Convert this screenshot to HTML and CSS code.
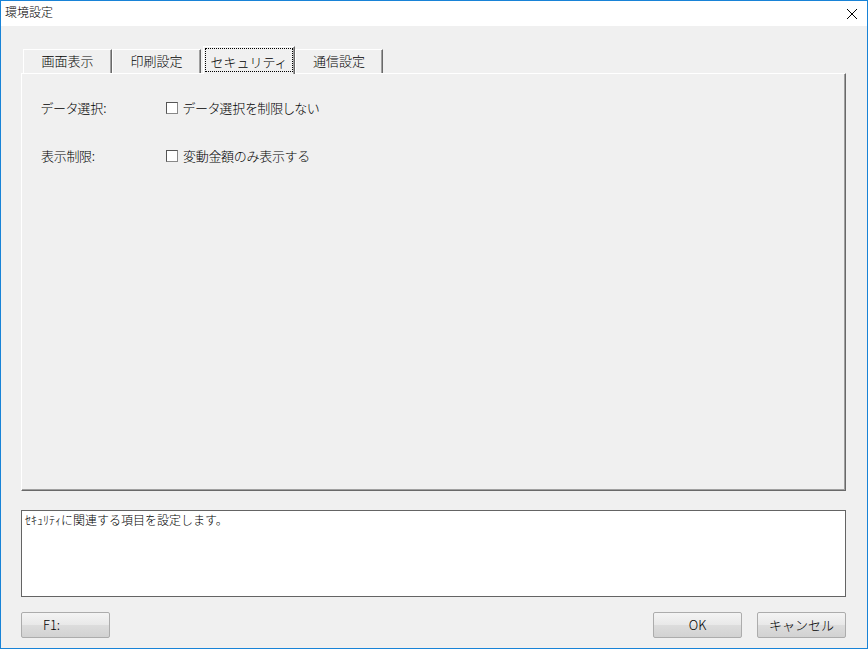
FILE: index.html
```html
<!DOCTYPE html>
<html lang="ja">
<head>
<meta charset="utf-8">
<title>環境設定</title>
<link rel="stylesheet" href="styles.css">
</head>
<body>
<div class="window">
  <div class="titlebar">
    <span class="title">環境設定</span>
    <svg class="close" width="12" height="12" viewBox="0 0 12 12"><path d="M1 1 L11 11 M11 1 L1 11" stroke="#000" stroke-width="1" fill="none"/></svg>
  </div>
  <div class="client">
    <div class="tabs">
      <div class="tab first">画面表示</div>
      <div class="tab">印刷設定</div>
      <div class="tab selected"><span class="focus">セキュリティ</span></div>
      <div class="tab last">通信設定</div>
    </div>
    <div class="panel">
      <div class="form">
        <div class="label prop">データ選択:</div>
        <label class="check"><span class="box"></span><span class="prop">データ選択を制限しない</span></label>
        <div class="label">表示制限:</div>
        <label class="check"><span class="box"></span><span>変動金額のみ表示する</span></label>
      </div>
    </div>
    <div class="desc">ｾｷｭﾘﾃｨに関連する項目を設定します。</div>
    <div class="buttons">
      <button class="btn f1">F1:</button>
      <div class="right">
        <button class="btn">OK</button>
        <button class="btn">キャンセル</button>
      </div>
    </div>
  </div>
</div>
</body>
</html>
```
FILE: styles.css
```css
html, body {
  margin: 0;
  padding: 0;
}
body {
  font-family: "Noto Sans CJK JP", "Liberation Sans", sans-serif;
  font-size: 12px;
  font-weight: 300;
  color: #000;
}
.window {
  width: 868px;
  height: 649px;
  box-sizing: border-box;
  border: 1px solid #1883d7;
  background: #f0f0f0;
  display: flex;
  flex-direction: column;
}
.titlebar {
  height: 25px;
  background: #fff;
  display: flex;
  align-items: center;
  justify-content: space-between;
  padding: 0 9px 0 4px;
}
.title {
  font-size: 12px;
  line-height: 16px;
  margin-top: -3px;
}
.close {
  display: block;
}
.client {
  flex: 1;
  padding: 20px 21px 0 20px;
  display: flex;
  flex-direction: column;
}
.tabs {
  display: flex;
  align-items: flex-end;
  height: 27px;
  position: relative;
  z-index: 1;
}
.tab {
  box-sizing: border-box;
  width: 89px;
  height: 24px;
  border-top: 1px solid #fff;
  border-left: 1px solid #fff;
  border-right: 1px solid #696969;
  box-shadow: inset -1px 0 0 #a0a0a0;
  padding-top: 3px;
  text-align: center;
  font-size: 13px;
  line-height: 16px;
  background: #f0f0f0;
}
.tab.first {
  margin-left: 2px;
}
.tab.last {
  width: 88px;
}
.tab.selected {
  width: 92px;
  height: 28px;
  margin-left: 2px;
  margin-bottom: -1px;
  padding: 1px 1px 2px 1px;
}
.focus {
  display: block;
  height: 24px;
  box-sizing: border-box;
  border: 1px dotted #000;
  padding-top: 5px;
  line-height: 16px;
}
.panel {
  box-sizing: border-box;
  height: 418px;
  border-top: 1px solid #fff;
  border-left: 1px solid #fff;
  border-right: 1px solid #696969;
  border-bottom: 1px solid #696969;
  box-shadow: inset -1px -1px 0 #a0a0a0;
  padding: 26px 0 0 19px;
}
.form {
  display: grid;
  grid-template-columns: 125px auto;
  row-gap: 32px;
  font-size: 13px;
  line-height: 16px;
  letter-spacing: -0.3px;
}
.prop {
  font-feature-settings: "palt";
  letter-spacing: 0;
}
.check {
  display: flex;
  align-items: center;
  gap: 5px;
}
.box {
  width: 12px;
  height: 12px;
  box-sizing: border-box;
  border: 1px solid #555;
  border-right-color: #888;
  border-bottom-color: #888;
  background: #fff;
}
.desc {
  margin-top: 19px;
  height: 87px;
  box-sizing: border-box;
  border: 1px solid #646464;
  background: #fff;
  padding: 1px 3px;
  font-size: 12px;
  line-height: 16px;
}
.buttons {
  margin-top: 15px;
  display: flex;
  justify-content: space-between;
}
.right {
  display: flex;
  gap: 15px;
}
.btn {
  width: 89px;
  height: 26px;
  box-sizing: border-box;
  border: 1px solid #acacac;
  border-radius: 2px;
  background: linear-gradient(#f4f4f4, #e8e8e8 50%, #dcdcdc 51%, #d2d2d2);
  font-family: "Noto Sans CJK JP", "Liberation Sans", sans-serif;
  font-size: 13px;
  font-weight: 300;
  line-height: 16px;
  padding: 0;
  color: #000;
}
.btn.f1 {
  text-align: left;
  padding-left: 21px;
}
```
